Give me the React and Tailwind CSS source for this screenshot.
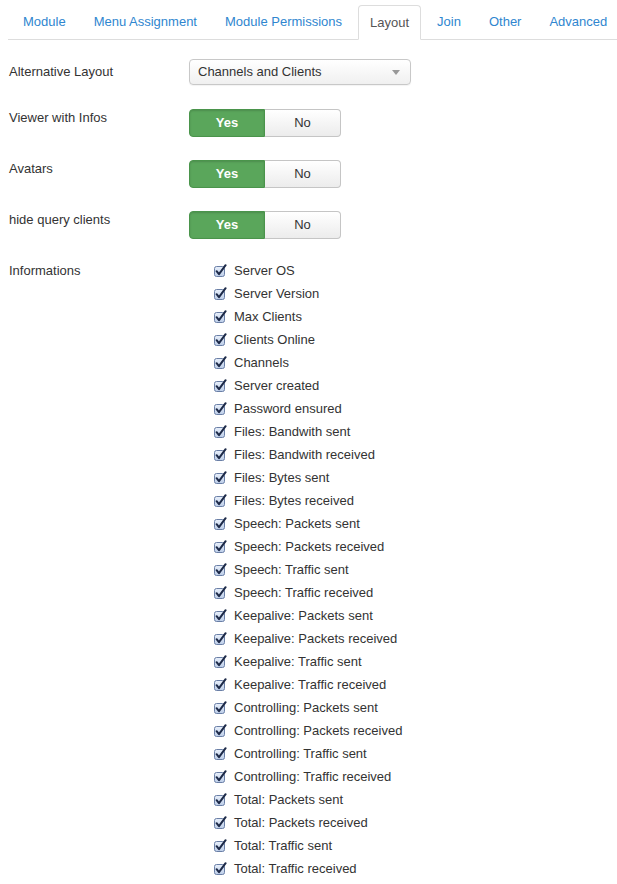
import React from "react";

const tabs = ["Module", "Menu Assignment", "Module Permissions", "Layout", "Join", "Other", "Advanced"];

const infos = [
  "Server OS",
  "Server Version",
  "Max Clients",
  "Clients Online",
  "Channels",
  "Server created",
  "Password ensured",
  "Files: Bandwith sent",
  "Files: Bandwith received",
  "Files: Bytes sent",
  "Files: Bytes received",
  "Speech: Packets sent",
  "Speech: Packets received",
  "Speech: Traffic sent",
  "Speech: Traffic received",
  "Keepalive: Packets sent",
  "Keepalive: Packets received",
  "Keepalive: Traffic sent",
  "Keepalive: Traffic received",
  "Controlling: Packets sent",
  "Controlling: Packets received",
  "Controlling: Traffic sent",
  "Controlling: Traffic received",
  "Total: Packets sent",
  "Total: Packets received",
  "Total: Traffic sent",
  "Total: Traffic received",
];

function Check() {
  return (
    <svg width="14" height="14" viewBox="0 0 14 14" className="shrink-0">
      <defs>
        <linearGradient id="cbg" x1="0" y1="0" x2="0" y2="1">
          <stop offset="0" stopColor="#e9f0fb" />
          <stop offset="1" stopColor="#bccde8" />
        </linearGradient>
      </defs>
      <rect x="1.5" y="2.5" width="10" height="10" rx="2" fill="url(#cbg)" stroke="#6a7fa6" strokeWidth="1" />
      <path d="M3.6 7.2 L6 10.2 L12.6 1.2" fill="none" stroke="#1d2a48" strokeWidth="2" strokeLinecap="round" strokeLinejoin="round" />
    </svg>
  );
}

function Toggle() {
  return (
    <div className="flex h-[28px] w-[152px] text-[13px]">
      <div className="flex w-[76px] items-center justify-center rounded-l-[4px] border border-[#4a944b] bg-[#5aa65b] font-bold text-white shadow-[inset_0_1px_2px_rgba(0,0,0,0.15)]">
        Yes
      </div>
      <div className="flex w-[76px] items-center justify-center rounded-r-[4px] border border-l-0 border-[#c5c5c5] bg-gradient-to-b from-white to-[#ececec] text-[#333]">
        No
      </div>
    </div>
  );
}

export default function App() {
  return (
    <div className="w-[617px] h-[884px] bg-white text-[13px] text-[#333]" style={{ fontFamily: '"Liberation Sans", Arial, sans-serif' }}>
      <div className="pt-[5px] pl-[8px]">
        <div className="flex border-b border-[#ddd] h-[35px] pl-[3px]">
          {tabs.map((t) => (
            <div
              key={t}
              className={
                t === "Layout"
                  ? "shrink-0 whitespace-nowrap mr-[4px] mb-[-1px] h-[35px] rounded-t-[4px] border border-[#ddd] border-b-white bg-white px-[11px] leading-[33px] text-[#555]"
                  : "shrink-0 whitespace-nowrap mr-[4px] h-[34px] px-[12px] leading-[34px] text-[#2f86cf]"
              }
            >
              {t}
            </div>
          ))}
        </div>
      </div>

      <div className="pl-[9px]">
        <div className="mt-[19px] flex items-center h-[26px]">
          <div className="w-[180px]">Alternative Layout</div>
          <div className="relative flex h-[26px] w-[222px] items-center rounded-[4px] border border-[#c8c8c8] bg-gradient-to-b from-white to-[#f0f0f0] pl-[8px] shadow-[0_1px_1px_rgba(0,0,0,0.05)]">
            Channels and Clients
            <svg width="8" height="6" viewBox="0 0 8 6" className="absolute right-[10px] top-[10px]">
              <path d="M0 0 L8 0 L4 5 Z" fill="#999" />
            </svg>
          </div>
        </div>

        {["Viewer with Infos", "Avatars", "hide query clients"].map((l, i) => (
          <div key={l} className={(i === 0 ? "mt-[24px]" : "mt-[23px]") + " flex items-start"}>
            <div className="w-[180px] leading-[17px]">{l}</div>
            <Toggle />
          </div>
        ))}

        <div className="mt-[20px] flex items-start">
          <div className="w-[180px] leading-[23px]">Informations</div>
          <div className="pl-[24px]">
            {infos.map((t) => (
              <div key={t} className="flex h-[23px] items-center gap-[7px]">
                <Check />
                <span>{t}</span>
              </div>
            ))}
          </div>
        </div>
      </div>
    </div>
  );
}
